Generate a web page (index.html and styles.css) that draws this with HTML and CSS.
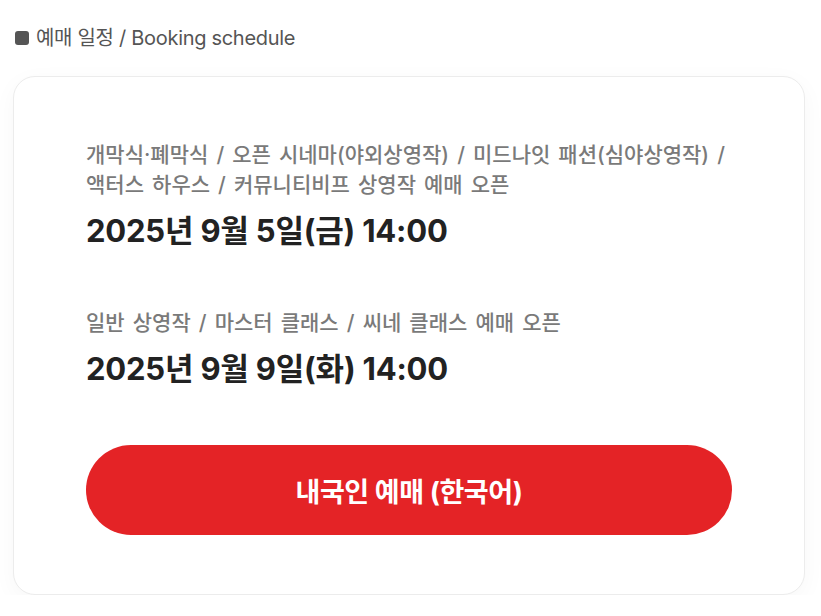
FILE: index.html
```html
<!DOCTYPE html>
<html lang="ko">
<head>
<meta charset="utf-8">
<link rel="stylesheet" href="styles.css">
</head>
<body>
<div class="page">
  <h2 class="section-title"><span class="square"></span>예매 일정 / Booking schedule</h2>
  <div class="card">
    <div class="item">
      <p class="label">개막식·폐막식 / 오픈 시네마(야외상영작) / 미드나잇 패션(심야상영작) /<br>액터스 하우스 / 커뮤니티비프 상영작 예매 오픈</p>
      <p class="date">2025년 9월 5일(금) 14:00</p>
    </div>
    <div class="item">
      <p class="label">일반 상영작 / 마스터 클래스 / 씨네 클래스 예매 오픈</p>
      <p class="date">2025년 9월 9일(화) 14:00</p>
    </div>
    <a class="btn" href="#">내국인 예매 (한국어)</a>
  </div>
</div>
</body>
</html>
```

FILE: styles.css
```css
html, body {
  margin: 0;
  padding: 0;
  background: #ffffff;
}
body {
  font-family: "Inter", "Noto Sans CJK KR", sans-serif;
}
.page {
  padding: 20px 16px 0 13px;
}
.section-title {
  display: flex;
  align-items: center;
  gap: 7px;
  margin: 0 0 20px 2px;
  font-size: 20px;
  font-weight: 400;
  color: #555;
  letter-spacing: -0.3px;
  line-height: 36px;
}
.square {
  width: 14px;
  height: 14px;
  border-radius: 3px;
  background: #555;
}
.card {
  box-sizing: border-box;
  width: 792px;
  border: 1px solid #ececec;
  border-radius: 22px;
  background: #fff;
  padding: 63px 72px 59px;
  box-shadow: 0 6px 24px rgba(0,0,0,0.035);
}
.item {
  margin-bottom: 57px;
}
.item + .item {
  margin-bottom: 56px;
}
.label {
  margin: 0;
  font-size: 21px;
  font-weight: 500;
  line-height: 30px;
  color: #7a7a7a;
  letter-spacing: 0;
  word-spacing: 2.5px;
}
.date {
  margin: 11px 0 0;
  font-size: 31px;
  font-weight: 700;
  line-height: 40px;
  color: #222;
  letter-spacing: -0.2px;
}
.btn {
  display: flex;
  align-items: center;
  justify-content: center;
  height: 90px;
  border-radius: 45px;
  background: #e42326;
  color: #fff;
  font-size: 27px;
  font-weight: 700;
  letter-spacing: -0.4px;
  text-decoration: none;
}
```
